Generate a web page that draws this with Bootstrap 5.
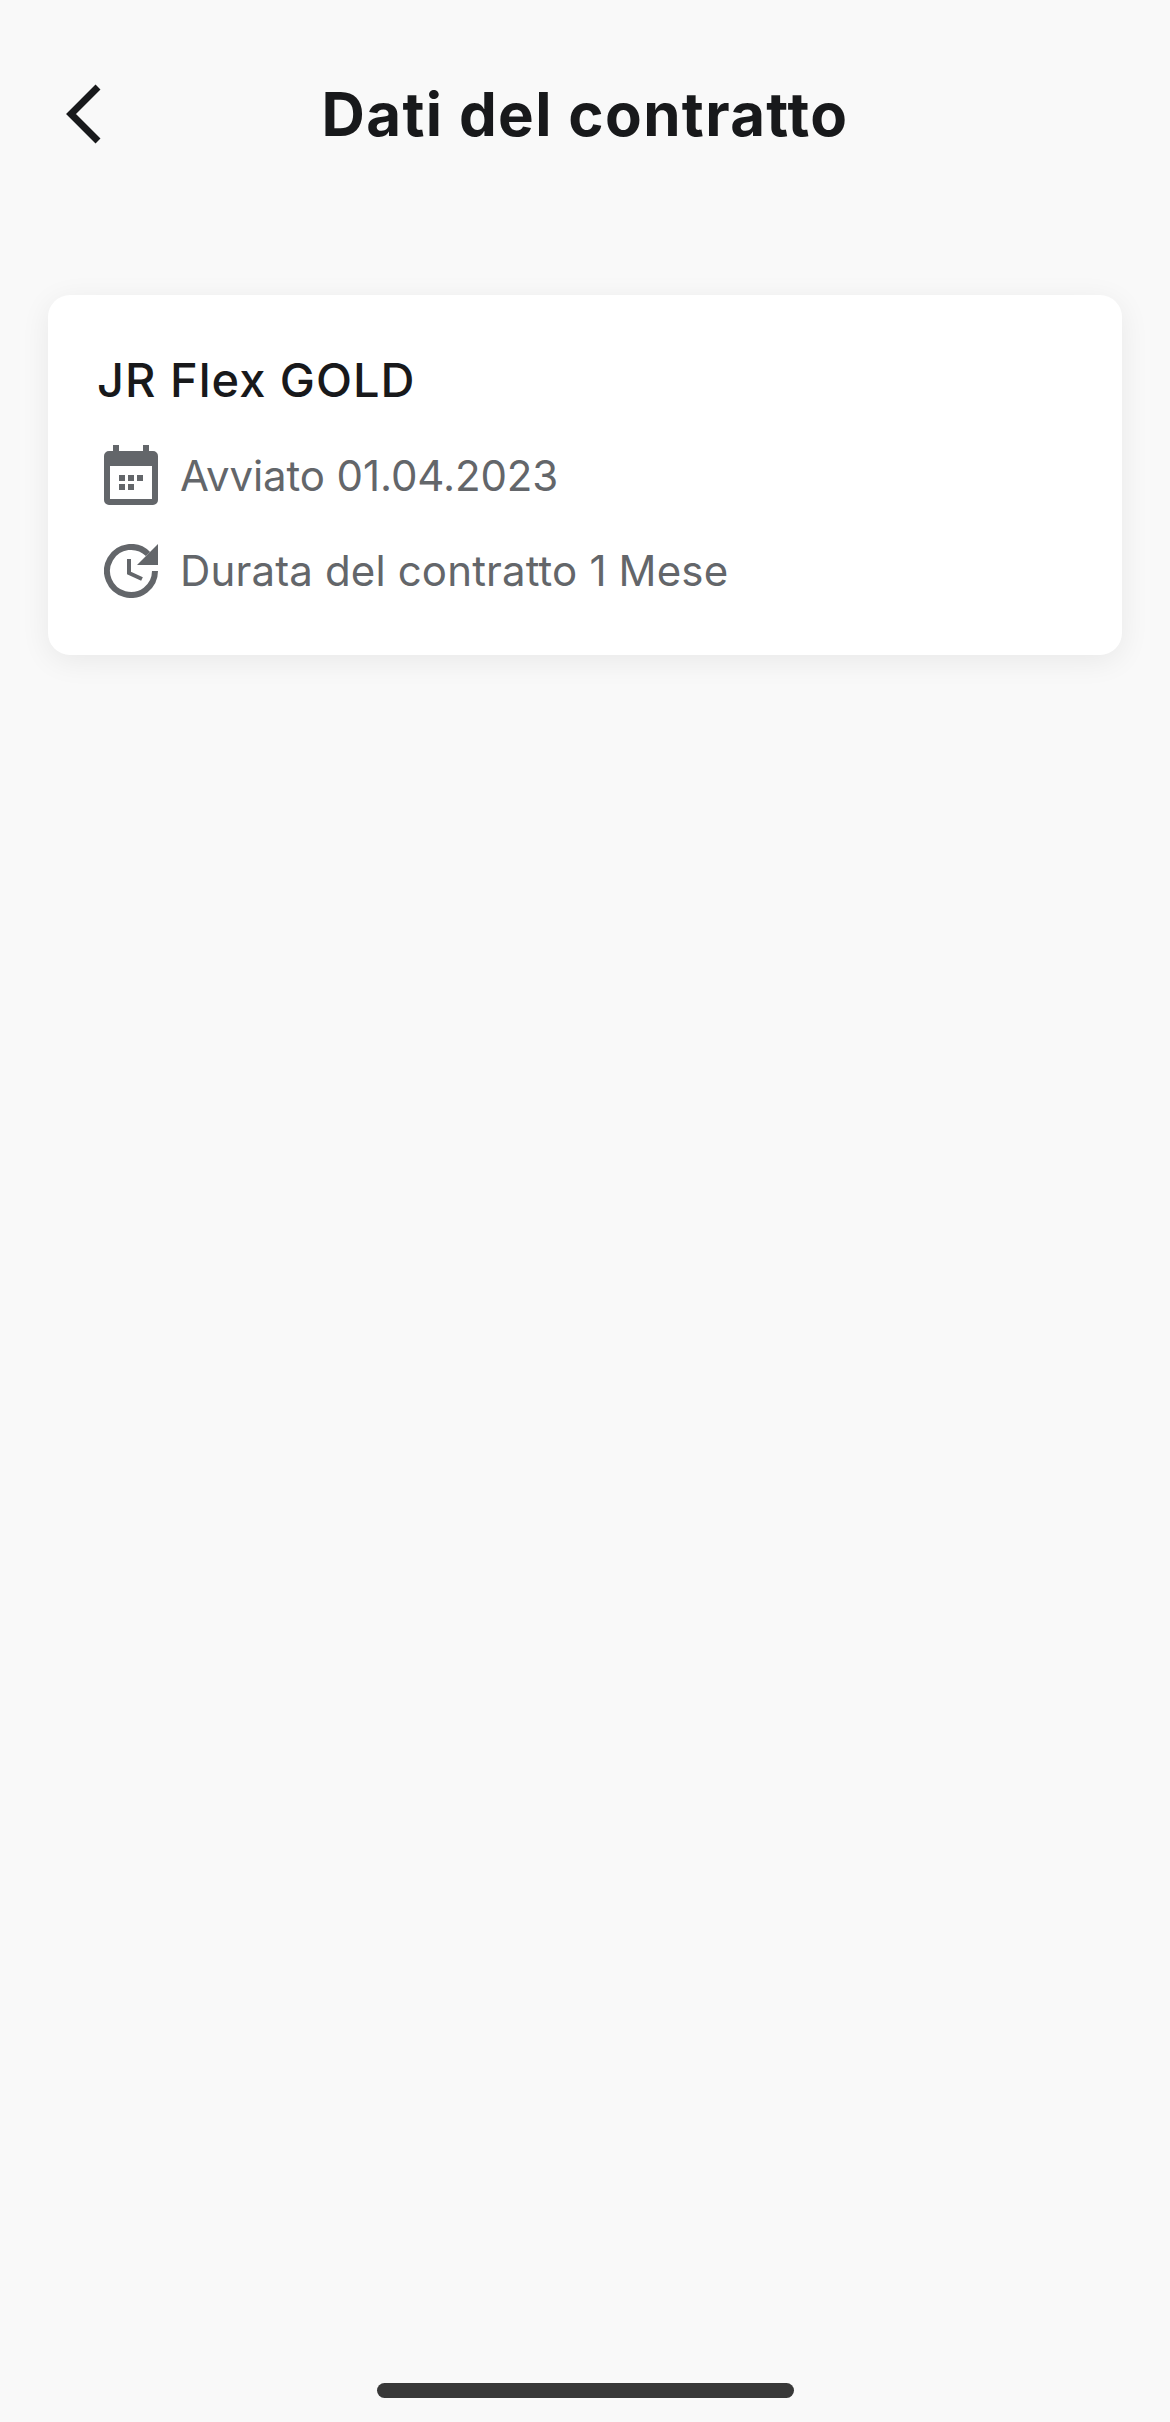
<!DOCTYPE html>
<html lang="it">
<head>
    <meta charset="UTF-8">
    <meta name="viewport" content="width=device-width, initial-scale=1.0">
    <title>Dati del contratto</title>
    <link rel="stylesheet" href="https://cdn.jsdelivr.net/npm/bootstrap@5.3.0/dist/css/bootstrap.min.css">
    <script src="https://cdn.jsdelivr.net/npm/bootstrap@5.3.0/dist/js/bootstrap.bundle.min.js"></script>
    <style>
        body {
            background: #f9f9f9;
            font-family: Inter, "Liberation Sans", sans-serif;
        }
        .app-screen {
            min-height: 2422px;
        }
        .app-header {
            height: 228px;
            padding: 0 64px 0 64px;
            margin-bottom: 67px;
        }
        .back-slot {
            width: 40px;
            height: 60px;
        }
        .page-title {
            font-size: 60px;
            line-height: 70px;
            font-weight: 700;
            letter-spacing: 1.35px;
            color: #18191b;
            margin: 0;
        }
        .contract-card {
            margin: 0 48px;
            padding: 55px 50px 53px 49px;
            border: 0;
            border-radius: 22px;
            box-shadow: 0 6px 30px rgba(0, 0, 0, .07);
        }
        .contract-name {
            font-size: 47px;
            line-height: 60px;
            font-weight: 500;
            letter-spacing: 1px;
            color: #18191b;
            margin: 0 0 35px 0;
        }
        .info-row {
            height: 62px;
            padding-left: 7px;
            gap: 22px;
            margin-bottom: 33px;
            color: #63666a;
            font-size: 42px;
            line-height: 60px;
        }
        .info-row:last-child {
            margin-bottom: 0;
        }
        .start-date {
            letter-spacing: -.1px;
        }
        .duration {
            letter-spacing: .15px;
        }
        .calendar-icon {
            margin-top: -3px;
        }
        .home-bar {
            width: 417px;
            height: 15px;
            margin: 0 auto 24px auto;
            border-radius: 8px;
            background: #383838;
        }
    </style>
</head>
<body>
    <div class="app-screen d-flex flex-column">
        <header class="app-header d-flex align-items-center">
            <a class="back-slot d-block" href="#" aria-label="Indietro">
                <svg width="40" height="60" viewBox="0 0 40 60" fill="none" stroke="#18191b" stroke-width="7" stroke-linejoin="miter">
                    <path d="M34 3 L7 30 L34 57"/>
                </svg>
            </a>
            <h1 class="page-title flex-grow-1 text-center">Dati del contratto</h1>
            <div class="back-slot"></div>
        </header>

        <div class="card contract-card">
            <h2 class="contract-name">JR Flex GOLD</h2>
            <div class="info-row d-flex align-items-center">
                <svg class="calendar-icon" width="54" height="60" viewBox="0 0 54 60" fill="#63666a">
                    <rect x="9" y="0" width="6" height="8"/>
                    <rect x="39" y="0" width="6" height="8"/>
                    <path fill-rule="evenodd" d="M5 6 H49 a5 5 0 0 1 5 5 V55 a5 5 0 0 1 -5 5 H5 a5 5 0 0 1 -5 -5 V11 a5 5 0 0 1 5 -5 Z M6 21 V54 H48 V21 Z"/>
                    <rect x="15" y="30" width="6" height="6"/>
                    <rect x="24" y="30" width="6" height="6"/>
                    <rect x="33" y="30" width="6" height="6"/>
                    <rect x="15" y="39" width="6" height="6"/>
                    <rect x="24" y="39" width="6" height="6"/>
                </svg>
                <span class="start-date">Avviato 01.04.2023</span>
            </div>
            <div class="info-row d-flex align-items-center">
                <svg width="54" height="54" viewBox="0 0 54 54" fill="none" stroke="#63666a">
                    <path stroke-width="6" d="M44 10 A24 24 0 1 0 51 27"/>
                    <path stroke-width="4" d="M25 15 V29 L38 35"/>
                    <path stroke="none" fill="#63666a" d="M54 0 V21 H33 Z"/>
                </svg>
                <span class="duration">Durata del contratto 1 Mese</span>
            </div>
        </div>

        <div class="home-bar mt-auto"></div>
    </div>
</body>
</html>
